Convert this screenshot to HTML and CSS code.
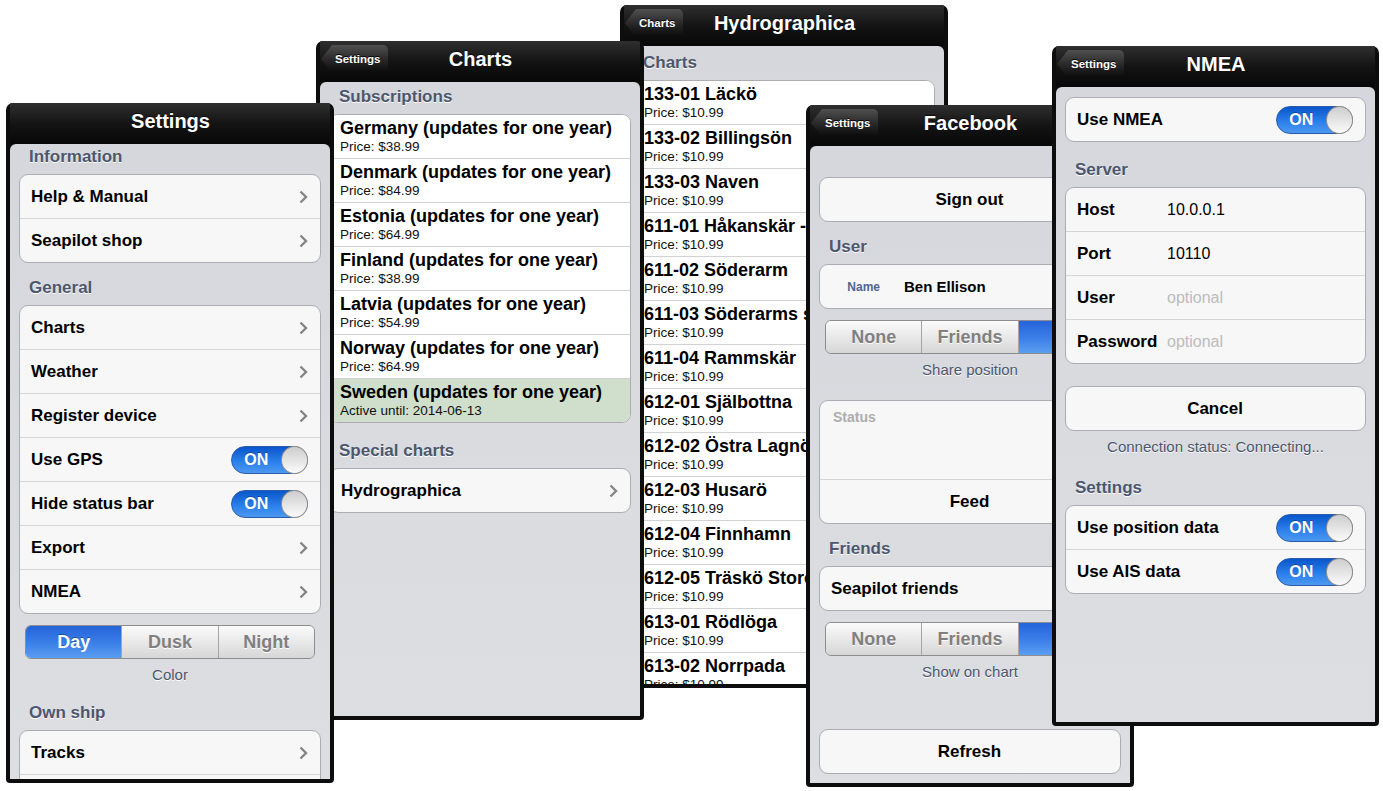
FILE: index.html
```html
<!DOCTYPE html>
<html lang="en">
<head>
    <meta charset="UTF-8">
    <title>Seapilot settings screens</title>
    <link rel="stylesheet" href="styles.css">
</head>
<body>
<div class="desk">

    <!-- Hydrographica (bottom of the stack) -->
    <div class="phone win-hydro">
        <div class="navbar">
            <span class="back">Charts</span>
            <h1>Hydrographica</h1>
        </div>
        <div class="screen">
            <div class="group-title">Charts</div>
            <div class="group list">
                <div class="item"><b>133-01 Läckö</b><small>Price: $10.99</small></div>
                <div class="item"><b>133-02 Billingsön</b><small>Price: $10.99</small></div>
                <div class="item"><b>133-03 Naven</b><small>Price: $10.99</small></div>
                <div class="item"><b>611-01 Håkanskär - Tjärven</b><small>Price: $10.99</small></div>
                <div class="item"><b>611-02 Söderarm</b><small>Price: $10.99</small></div>
                <div class="item"><b>611-03 Söderarms skärgård</b><small>Price: $10.99</small></div>
                <div class="item"><b>611-04 Rammskär</b><small>Price: $10.99</small></div>
                <div class="item"><b>612-01 Själbottna</b><small>Price: $10.99</small></div>
                <div class="item"><b>612-02 Östra Lagnö</b><small>Price: $10.99</small></div>
                <div class="item"><b>612-03 Husarö</b><small>Price: $10.99</small></div>
                <div class="item"><b>612-04 Finnhamn</b><small>Price: $10.99</small></div>
                <div class="item"><b>612-05 Träskö Storö</b><small>Price: $10.99</small></div>
                <div class="item"><b>613-01 Rödlöga</b><small>Price: $10.99</small></div>
                <div class="item"><b>613-02 Norrpada</b><small>Price: $10.99</small></div>
                <div class="item"><b>613-03 Kallskär</b><small>Price: $10.99</small></div>
            </div>
        </div>
    </div>

    <!-- Charts -->
    <div class="phone win-charts">
        <div class="navbar">
            <span class="back">Settings</span>
            <h1>Charts</h1>
        </div>
        <div class="screen">
            <div class="group-title">Subscriptions</div>
            <div class="group list">
                <div class="item"><b>Germany (updates for one year)</b><small>Price: $38.99</small></div>
                <div class="item"><b>Denmark (updates for one year)</b><small>Price: $84.99</small></div>
                <div class="item"><b>Estonia (updates for one year)</b><small>Price: $64.99</small></div>
                <div class="item"><b>Finland (updates for one year)</b><small>Price: $38.99</small></div>
                <div class="item"><b>Latvia (updates for one year)</b><small>Price: $54.99</small></div>
                <div class="item"><b>Norway (updates for one year)</b><small>Price: $64.99</small></div>
                <div class="item active"><b>Sweden (updates for one year)</b><small>Active until: 2014-06-13</small></div>
            </div>
            <div class="group-title loose">Special charts</div>
            <div class="group">
                <div class="row">Hydrographica<svg class="chev" viewBox="0 0 9 14" width="9" height="14"><path d="M1.5 1.5 L7 7 L1.5 12.5"/></svg></div>
            </div>
        </div>
    </div>

    <!-- Settings (top left) -->
    <div class="phone win-settings">
        <div class="navbar">
            <span></span>
            <h1>Settings</h1>
        </div>
        <div class="screen">
            <div class="group-title">Information</div>
            <div class="group">
                <div class="row">Help &amp; Manual<svg class="chev" viewBox="0 0 9 14" width="9" height="14"><path d="M1.5 1.5 L7 7 L1.5 12.5"/></svg></div>
                <div class="row">Seapilot shop<svg class="chev" viewBox="0 0 9 14" width="9" height="14"><path d="M1.5 1.5 L7 7 L1.5 12.5"/></svg></div>
            </div>
            <div class="group-title">General</div>
            <div class="group">
                <div class="row">Charts<svg class="chev" viewBox="0 0 9 14" width="9" height="14"><path d="M1.5 1.5 L7 7 L1.5 12.5"/></svg></div>
                <div class="row">Weather<svg class="chev" viewBox="0 0 9 14" width="9" height="14"><path d="M1.5 1.5 L7 7 L1.5 12.5"/></svg></div>
                <div class="row">Register device<svg class="chev" viewBox="0 0 9 14" width="9" height="14"><path d="M1.5 1.5 L7 7 L1.5 12.5"/></svg></div>
                <div class="row">Use GPS<span class="toggle"><span class="on">ON</span><span class="knob"></span></span></div>
                <div class="row">Hide status bar<span class="toggle"><span class="on">ON</span><span class="knob"></span></span></div>
                <div class="row">Export<svg class="chev" viewBox="0 0 9 14" width="9" height="14"><path d="M1.5 1.5 L7 7 L1.5 12.5"/></svg></div>
                <div class="row">NMEA<svg class="chev" viewBox="0 0 9 14" width="9" height="14"><path d="M1.5 1.5 L7 7 L1.5 12.5"/></svg></div>
            </div>
            <div class="seg"><span class="sel">Day</span><span>Dusk</span><span>Night</span></div>
            <div class="note">Color</div>
            <div class="group-title">Own ship</div>
            <div class="group">
                <div class="row">Tracks<svg class="chev" viewBox="0 0 9 14" width="9" height="14"><path d="M1.5 1.5 L7 7 L1.5 12.5"/></svg></div>
                <div class="row">Routes<svg class="chev" viewBox="0 0 9 14" width="9" height="14"><path d="M1.5 1.5 L7 7 L1.5 12.5"/></svg></div>
            </div>
        </div>
    </div>

    <!-- Facebook -->
    <div class="phone win-facebook">
        <div class="navbar">
            <span class="back">Settings</span>
            <h1>Facebook</h1>
        </div>
        <div class="screen">
            <div class="group">
                <div class="row center">Sign out</div>
            </div>
            <div class="group-title">User</div>
            <div class="group">
                <div class="row contact"><span class="tag">Name</span><span class="who">Ben Ellison</span></div>
            </div>
            <div class="seg"><span>None</span><span>Friends</span><span class="sel">All</span></div>
            <div class="note">Share position</div>
            <div class="group after-note">
                <div class="row status">Status</div>
                <div class="row center">Feed</div>
            </div>
            <div class="group-title">Friends</div>
            <div class="group">
                <div class="row">Seapilot friends<svg class="chev" viewBox="0 0 9 14" width="9" height="14"><path d="M1.5 1.5 L7 7 L1.5 12.5"/></svg></div>
            </div>
            <div class="seg"><span>None</span><span>Friends</span><span class="sel">All</span></div>
            <div class="note">Show on chart</div>
            <div class="group far">
                <div class="row center">Refresh</div>
            </div>
        </div>
    </div>

    <!-- NMEA (top right) -->
    <div class="phone win-nmea">
        <div class="navbar">
            <span class="back">Settings</span>
            <h1>NMEA</h1>
        </div>
        <div class="screen">
            <div class="group">
                <div class="row">Use NMEA<span class="toggle"><span class="on">ON</span><span class="knob"></span></span></div>
            </div>
            <div class="group-title loose">Server</div>
            <div class="group">
                <div class="row field"><span class="key">Host</span><span class="val">10.0.0.1</span></div>
                <div class="row field"><span class="key">Port</span><span class="val">10110</span></div>
                <div class="row field"><span class="key">User</span><span class="val hint">optional</span></div>
                <div class="row field"><span class="key">Password</span><span class="val hint">optional</span></div>
            </div>
            <div class="group near">
                <div class="row center">Cancel</div>
            </div>
            <div class="note">Connection status: Connecting...</div>
            <div class="group-title loose">Settings</div>
            <div class="group">
                <div class="row">Use position data<span class="toggle"><span class="on">ON</span><span class="knob"></span></span></div>
                <div class="row">Use AIS data<span class="toggle"><span class="on">ON</span><span class="knob"></span></span></div>
            </div>
        </div>
    </div>

</div>
</body>
</html>
```

FILE: styles.css
```css
* {
    box-sizing: border-box;
}
body {
    margin: 0;
    background: #fff;
    font-family: "Liberation Sans", Arial, Helvetica, sans-serif;
    overflow: hidden;
}
.desk {
    position: relative;
    width: 1383px;
    height: 791px;
}

/* phone windows scattered over the canvas */
.phone {
    position: absolute;
    display: flex;
    flex-direction: column;
    background: #0d0d0d;
    border-radius: 7px 7px 4px 4px;
    padding: 0 4px 4px;
    overflow: hidden;
}
.win-settings {
    left: 6px;
    top: 103px;
    width: 328px;
    height: 680px;
    z-index: 3;
}
.win-charts {
    left: 316px;
    top: 41px;
    width: 328px;
    height: 679px;
    z-index: 2;
}
.win-hydro {
    left: 620px;
    top: 5px;
    width: 328px;
    height: 683px;
    z-index: 1;
}
.win-facebook {
    left: 806px;
    top: 105px;
    width: 328px;
    height: 682px;
    z-index: 2;
}
.win-nmea {
    left: 1052px;
    top: 46px;
    width: 327px;
    height: 680px;
    z-index: 3;
}

.navbar {
    flex: none;
    height: 41px;
    padding: 0 0 5px 1px;
    display: grid;
    grid-template-columns: 1fr auto 1fr;
    align-items: center;
    background: linear-gradient(#2f2f2f, #141414 50%, #070707);
}
.navbar h1 {
    margin: 0;
    color: #fff;
    font-size: 20px;
    font-weight: bold;
    text-shadow: 0 -1px 0 rgba(0, 0, 0, 0.6);
    white-space: nowrap;
}
.back {
    justify-self: start;
    height: 28px;
    line-height: 28px;
    padding: 0 8px 0 14px;
    color: #fff;
    font-size: 11.5px;
    font-weight: bold;
    background: linear-gradient(#505050, #2a2a2a 50%, #0a0a0a);
    border-radius: 0 5px 5px 0;
    clip-path: polygon(11px 0, 100% 0, 100% 100%, 11px 100%, 0 50%);
    text-shadow: 0 -1px 0 #000;
}

.screen {
    flex: 1;
    background: linear-gradient(#d5d7dc, #dcdee2);
    border-radius: 6px 6px 0 0;
    overflow: hidden;
}
.win-settings .screen {
    padding-top: 3px;
}
.win-charts .screen {
    padding-top: 5px;
}
.win-hydro .screen {
    padding-top: 7px;
}
.win-facebook .screen {
    padding-top: 31px;
}
.win-nmea .screen {
    padding-top: 10px;
}

.group-title {
    padding: 15px 19px 7px;
    font-size: 17px;
    font-weight: bold;
    line-height: 20px;
    color: #4c566c;
    text-shadow: 0 1px 0 #fff;
}
.group-title.loose {
    padding-top: 18px;
}
.screen > .group-title:first-child {
    padding-top: 0;
}

.group {
    margin: 0 9px;
    background: #f7f7f7;
    border: 1px solid #abadb2;
    border-radius: 9px;
    overflow: hidden;
}
.group.after-note {
    margin-top: 17px;
}
.group.near {
    margin-top: 22px;
}
.group.far {
    margin-top: 44px;
}
.row {
    box-sizing: content-box;
    height: 43px;
    display: flex;
    align-items: center;
    padding: 0 12px 0 11px;
    font-size: 17px;
    font-weight: bold;
    color: #000;
    white-space: nowrap;
}
.row + .row {
    border-top: 1px solid #d6d6d6;
}
.row.center {
    justify-content: center;
}
.chev {
    margin-left: auto;
    fill: none;
    stroke: #858585;
    stroke-width: 2.4;
}

/* chart lists with a price line */
.list {
    background: #fff;
}
.item {
    box-sizing: content-box;
    height: 40px;
    padding: 3px 10px 0;
    background: #fff;
    white-space: nowrap;
    color: #000;
}
.item + .item {
    border-top: 1px solid #d2d2d2;
}
.item b {
    display: block;
    font-size: 18px;
    line-height: 21px;
}
.item small {
    display: block;
    font-size: 13.5px;
    line-height: 16px;
    color: #111;
}
.item.active {
    background: #d0dfcc;
}

/* switches */
.toggle {
    margin-left: auto;
    width: 77px;
    height: 28px;
    border-radius: 14px;
    display: flex;
    align-items: center;
    background: linear-gradient(#0a56cc, #2d82ec 60%, #4d98f1);
    border: 1px solid #2a5aa8;
}
.toggle .on {
    width: 50px;
    text-align: center;
    color: #fff;
    font-size: 16px;
    font-weight: bold;
    text-shadow: 0 -1px 0 rgba(0, 0, 0, 0.3);
}
.knob {
    width: 28px;
    height: 28px;
    margin: 0 -1px 0 auto;
    border-radius: 50%;
    background: linear-gradient(#cdcdcd, #fbfbfb);
    border: 1px solid #8f8f8f;
}

/* segmented controls */
.seg {
    display: flex;
    height: 34px;
    margin: 11px 15px 0;
    border: 1px solid #8d8d8d;
    border-radius: 6px;
    overflow: hidden;
}
.seg span {
    flex: 1;
    display: flex;
    align-items: center;
    justify-content: center;
    background: linear-gradient(#fbfbfb, #d6d6d6);
    color: #808080;
    font-size: 18px;
    font-weight: bold;
    text-shadow: 0 1px 0 #fff;
}
.seg span + span {
    border-left: 1px solid #a5a5a5;
}
.seg .sel {
    background: linear-gradient(#2463da, #3c80e9 55%, #5a9ef1);
    color: #fff;
    text-shadow: 0 -1px 0 rgba(0, 0, 0, 0.35);
}

.note {
    padding: 7px 0 4px;
    text-align: center;
    font-size: 15px;
    line-height: 18px;
    color: #4c566c;
    text-shadow: 0 1px 0 #fff;
}

/* facebook rows */
.contact {
    padding-left: 0;
}
.contact .tag {
    width: 60px;
    text-align: right;
    margin-right: 24px;
    font-size: 12px;
    color: #4f6593;
}
.contact .who {
    font-size: 15px;
}
.row.status {
    height: 70px;
    align-items: flex-start;
    padding: 8px 13px 0;
    font-size: 14px;
    line-height: 17px;
    color: #adadad;
}

/* nmea form rows */
.field .key {
    width: 90px;
}
.field .val {
    font-size: 16px;
    font-weight: normal;
}
.field .hint {
    color: #bcbcbc;
}
```
